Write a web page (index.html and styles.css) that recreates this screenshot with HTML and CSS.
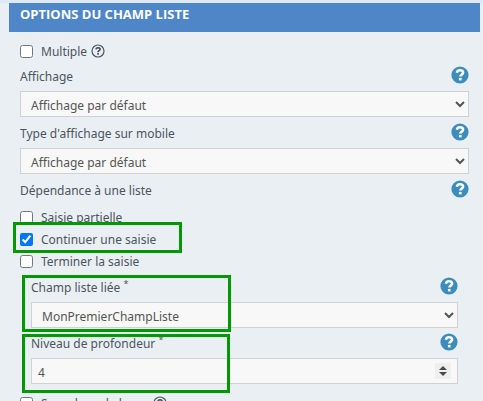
FILE: index.html
```html
<!DOCTYPE html>
<html lang="fr">
<head>
    <meta charset="UTF-8">
    <meta name="viewport" content="width=device-width, initial-scale=1.0">
    <title>Options du champ liste</title>
    <link rel="stylesheet" href="styles.css">
</head>
<body>
    <!-- shared icons -->
    <svg class="sprite" aria-hidden="true">
        <symbol id="help" viewBox="0 0 18 18">
            <circle cx="9" cy="9" r="8.6" fill="#3c8dbc"/>
            <path d="M5.8 6.7C6.2 5 7.4 4.3 9 4.3c1.8 0 3.1.9 3.1 2.4 0 2-2.8 1.8-2.8 3.9" fill="none" stroke="#fff" stroke-width="2.5"/>
            <rect x="7.9" y="11.9" width="2.7" height="2.5" fill="#fff"/>
        </symbol>
        <symbol id="help-outline" viewBox="0 0 14 14">
            <circle cx="7" cy="7" r="6" fill="none" stroke="#4a5561" stroke-width="1.2"/>
            <path d="M4.9 5.4C5.1 4.2 5.9 3.7 7 3.7c1.3 0 2.1.7 2.1 1.6C9.1 6.7 7 6.6 7 8.2" fill="none" stroke="#3f4a54" stroke-width="1.6"/>
            <rect x="6.2" y="9.1" width="1.7" height="1.6" fill="#3f4a54"/>
        </symbol>
    </svg>

    <form class="panel">
        <h2 class="panel-title">Options du champ liste</h2>
        <div class="panel-body">
            <div class="check">
                <input type="checkbox" id="multiple">
                <label for="multiple">Multiple</label>
                <svg class="hint"><use href="#help-outline"/></svg>
            </div>

            <div class="field">
                <div class="field-head">
                    <label for="affichage">Affichage</label>
                    <svg class="help"><use href="#help"/></svg>
                </div>
                <select class="control" id="affichage">
                    <option>Affichage par défaut</option>
                </select>
            </div>

            <div class="field">
                <div class="field-head">
                    <label for="mobile">Type d'affichage sur mobile</label>
                    <svg class="help"><use href="#help"/></svg>
                </div>
                <select class="control" id="mobile">
                    <option>Affichage par défaut</option>
                </select>
            </div>

            <div class="field-head">
                <span id="dependance">Dépendance à une liste</span>
                <svg class="help"><use href="#help"/></svg>
            </div>
            <div class="check-list" role="group" aria-labelledby="dependance">
                <div class="check">
                    <input type="checkbox" id="partielle">
                    <label for="partielle">Saisie partielle</label>
                </div>
                <div class="check">
                    <input type="checkbox" id="continuer" checked>
                    <label for="continuer">Continuer une saisie</label>
                    <span class="mark mark-check"></span>
                </div>
                <div class="check">
                    <input type="checkbox" id="terminer">
                    <label for="terminer">Terminer la saisie</label>
                </div>
            </div>

            <div class="nested">
                <div class="field">
                    <div class="field-head">
                        <label for="liee">Champ liste liée <sup>*</sup></label>
                        <svg class="help"><use href="#help"/></svg>
                    </div>
                    <select class="control" id="liee">
                        <option>MonPremierChampListe</option>
                    </select>
                    <span class="mark mark-list"></span>
                </div>
                <div class="field">
                    <div class="field-head">
                        <label for="niveau">Niveau de profondeur <sup>*</sup></label>
                        <svg class="help"><use href="#help"/></svg>
                    </div>
                    <div class="number">
                        <input class="control" type="number" id="niveau" value="4">
                        <svg class="spin" viewBox="0 0 16 16"><path d="M4 7l4-4 4 4zM4 9h8l-4 4z" fill="#4a4a4a"/></svg>
                    </div>
                    <span class="mark mark-number"></span>
                </div>
            </div>

            <div class="check">
                <input type="checkbox" id="scan">
                <label for="scan">Scan du code barre</label>
                <svg class="hint"><use href="#help-outline"/></svg>
            </div>
        </div>
    </form>
</body>
</html>
```

FILE: styles.css
```css
* {
    box-sizing: border-box;
}
html {
    height: 100%;
    overflow: hidden;
}
body {
    margin: 0;
    height: 100%;
    overflow: hidden;
    border-top: 3px solid #dfe9f6;
    background-color: #eaeff4;
    font-family: "Noto Sans", "Open Sans", sans-serif;
    font-size: 12px;
    line-height: 18px;
    color: #4a5561;
}
.sprite {
    display: none;
}
.panel {
    margin: 0 3px 0 9px;
}
.panel-title {
    margin: 0;
    padding: 2px 11px 9px;
    background-color: #4e86c8;
    color: #ffffff;
    font-family: "Open Sans", sans-serif;
    font-size: 13px;
    font-weight: bold;
    text-transform: uppercase;
}
.panel-body {
    padding: 8px 11px 0;
}
.check {
    position: relative;
    display: flex;
    align-items: center;
    height: 22px;
}
.check input {
    width: 13px;
    height: 13px;
    margin: 0 8px 0 0;
}
.check label {
    padding-top: 2px;
}
.hint {
    width: 14px;
    height: 14px;
    margin-left: 4px;
}
.field {
    position: relative;
    padding-bottom: 2px;
}
.field-head {
    display: flex;
    justify-content: space-between;
    align-items: center;
    height: 29px;
    padding-bottom: 3px;
}
.field-head label,
.field-head span {
    padding-top: 4px;
}
.help {
    width: 18px;
    height: 18px;
}
sup {
    font-size: 9px;
    line-height: 1px;
}
.control {
    display: block;
    width: 100%;
    height: 26px;
    margin: 0;
    padding: 2px 6px 0;
    border: 1px solid #cfd1d4;
    border-radius: 0;
    background-color: #f8f8f8;
    color: #555555;
    font-family: inherit;
    font-size: 12px;
}
.check-list {
    padding-top: 1px;
}
.nested {
    padding: 1px 11px 7px;
}
.nested .field {
    padding-bottom: 1px;
}
.number {
    position: relative;
}
.number input {
    appearance: textfield;
}
.spin {
    position: absolute;
    top: 5px;
    right: 7px;
    width: 16px;
    height: 16px;
    background-color: #efefef;
}
/* green frames over the highlighted rows */
.mark {
    position: absolute;
    border: 3px solid #009900;
    pointer-events: none;
}
.mark-check {
    top: -6px;
    left: -7px;
    width: 169px;
    height: 31px;
}
.mark-list {
    top: 2px;
    left: -9px;
    width: 209px;
    height: 57px;
}
.mark-number {
    top: 5px;
    left: -9px;
    width: 208px;
    height: 59px;
}
```
